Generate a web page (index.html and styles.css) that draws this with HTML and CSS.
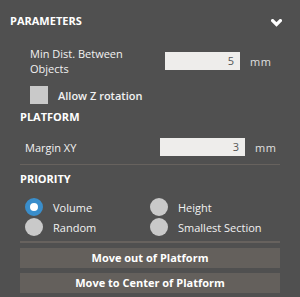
FILE: index.html
```html
<!DOCTYPE html>
<html>
<head>
<meta charset="utf-8">
<link rel="stylesheet" href="styles.css">
</head>
<body>
<div class="panel">
  <div class="head">
    <span class="title">PARAMETERS</span>
    <svg class="chev" width="11" height="8" viewBox="0 0 11 8"><polyline points="1.6,1.6 5.5,5.5 9.4,1.6" fill="none" stroke="#fff" stroke-width="3.2" stroke-linecap="square"/></svg>
  </div>
  <div class="row row-dist">
    <div class="label label-dist">Min Dist. Between Objects</div>
    <div class="input input-dist">5</div>
    <div class="unit">mm</div>
  </div>
  <div class="check-row">
    <div class="checkbox"></div>
    <span class="check-label">Allow Z rotation</span>
  </div>
  <div class="section">PLATFORM</div>
  <div class="row row-margin">
    <div class="label label-margin">Margin XY</div>
    <div class="input input-margin">3</div>
    <div class="unit">mm</div>
  </div>
  <div class="divider"></div>
  <div class="section section-priority">PRIORITY</div>
  <div class="radios">
    <div class="radio"><span class="dot on"></span><span>Volume</span></div>
    <div class="radio"><span class="dot"></span><span>Height</span></div>
    <div class="radio"><span class="dot"></span><span>Random</span></div>
    <div class="radio"><span class="dot"></span><span>Smallest Section</span></div>
  </div>
  <div class="divider thick"></div>
  <div class="btn btn-first">Move out of Platform</div>
  <div class="btn">Move to Center of Platform</div>
</div>
</body>
</html>
```
FILE: styles.css
```css
html, body {
  margin: 0;
  padding: 0;
  background: #505050;
}
body {
  width: 300px;
  height: 297px;
  overflow: hidden;
  font-family: "Open Sans", "DejaVu Sans", sans-serif;
  font-size: 11px;
  line-height: 15px;
  color: #f2f2f2;
}
.panel {
  padding: 13px 20px 0 20px;
}
.head {
  display: flex;
  justify-content: space-between;
  align-items: center;
  margin-left: -10px;
  height: 15px;
}
.title {
  font-weight: bold;
  color: #fff;
}
.chev {
  display: block;
  margin-right: -2px;
  margin-top: 4px;
}
.row {
  display: flex;
  align-items: center;
}
.row-dist {
  margin-top: 18px;
  padding-left: 10px;
}
.label-dist {
  width: 120px;
  margin-right: 15px;
}
.input {
  height: 18px;
  line-height: 18px;
  background: #eeedeb;
  color: #555;
  text-align: right;
  box-sizing: border-box;
  padding-right: 6px;
}
.input-dist {
  width: 75px;
}
.unit {
  margin-left: 10px;
  color: #e0e0e0;
  letter-spacing: 0.5px;
}
.check-row {
  display: flex;
  align-items: center;
  margin-top: 10px;
  padding-left: 10px;
}
.checkbox {
  width: 18px;
  height: 18px;
  background: #c9c9c9;
  margin-right: 10px;
}
.check-label {
  font-weight: 600;
}
.section {
  font-weight: bold;
  color: #fff;
  margin-top: 5px;
}
.row-margin {
  margin-top: 14px;
  padding-left: 5px;
}
.label-margin {
  width: 135px;
}
.input-margin {
  width: 85px;
}
.divider {
  height: 1px;
  background: #67625e;
  margin-top: 8px;
}
.section-priority {
  margin-top: 6px;
}
.radios {
  display: grid;
  grid-template-columns: 125px 1fr;
  row-gap: 2px;
  margin-top: 12px;
  padding-left: 5px;
}
.radio {
  display: flex;
  align-items: center;
  height: 18px;
}
.dot {
  width: 18px;
  height: 18px;
  border-radius: 50%;
  background: #c9c9c9;
  margin-right: 10px;
  box-sizing: border-box;
  flex: none;
}
.dot.on {
  background: #fff;
  border: 5px solid #3a8ecb;
}
.divider.thick {
  height: 2px;
  margin-top: 5px;
}
.btn {
  height: 20px;
  line-height: 20px;
  background: #64605c;
  color: #fff;
  font-weight: bold;
  text-align: center;
  margin-top: 5px;
}
```
